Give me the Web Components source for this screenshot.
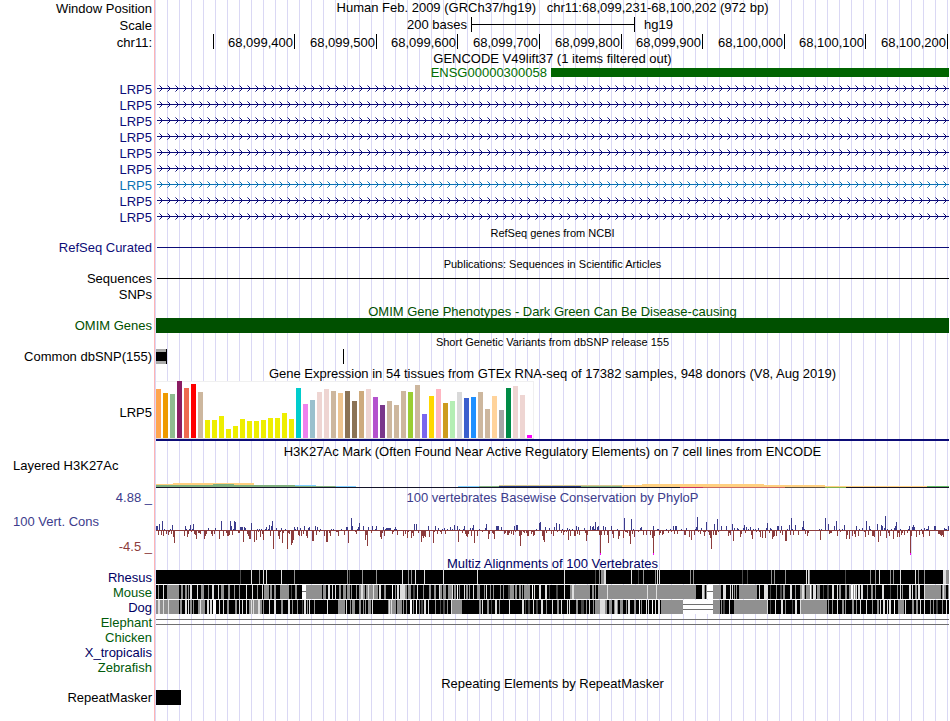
<!DOCTYPE html>
<html lang="en">
<head>
<meta charset="utf-8">
<title>Genome Browser</title>
<style>
body { margin: 0; background: #fff; }
</style>
</head>
<body>
<genome-browser>
  <track-row label="Window Position" size="17"><track-title head>Human Feb. 2009 (GRCh37/hg19)&nbsp;&nbsp; chr11:68,099,231-68,100,202 (972 bp)</track-title></track-row>
  <track-row label="Scale" size="17"><scale-bar assembly="hg19">200 bases</scale-bar></track-row>
  <track-row label="chr11:" size="17"><axis-ruler></axis-ruler></track-row>
  <track-row size="15"><track-title head>GENCODE V49lift37 (1 items filtered out)</track-title></track-row>
  <track-row size="14"><gene-block>ENSG00000300058</gene-block></track-row>
  <track-row label="LRP5" tone="navy" low><intron-line></intron-line></track-row>
  <track-row label="LRP5" tone="navy" low><intron-line></intron-line></track-row>
  <track-row label="LRP5" tone="navy" low><intron-line></intron-line></track-row>
  <track-row label="LRP5" tone="navy" low><intron-line></intron-line></track-row>
  <track-row label="LRP5" tone="navy" low><intron-line></intron-line></track-row>
  <track-row label="LRP5" tone="navy" low><intron-line></intron-line></track-row>
  <track-row label="LRP5" tone="blue" low><intron-line></intron-line></track-row>
  <track-row label="LRP5" tone="navy" low><intron-line></intron-line></track-row>
  <track-row label="LRP5" tone="navy" low><intron-line></intron-line></track-row>
  <track-row><track-title small>RefSeq genes from NCBI</track-title></track-row>
  <track-row label="RefSeq Curated" tone="navy"><intron-line plain></intron-line></track-row>
  <track-row size="15"><track-title small head>Publications: Sequences in Scientific Articles</track-title></track-row>
  <track-row label="Sequences"><intron-line plain></intron-line></track-row>
  <track-row label="SNPs"></track-row>
  <track-row size="15" tone="omim"><track-title>OMIM Gene Phenotypes - Dark Green Can Be Disease-causing</track-title></track-row>
  <track-row label="OMIM Genes" tone="omim"><feature-boxes kind="omim"></feature-boxes></track-row>
  <track-row size="15"><track-title small head>Short Genetic Variants from dbSNP release 155</track-title></track-row>
  <track-row label="Common dbSNP(155)"><feature-boxes kind="snp"></feature-boxes></track-row>
  <track-row><track-title>Gene Expression in 54 tissues from GTEx RNA-seq of 17382 samples, 948 donors (V8, Aug 2019)</track-title></track-row>
  <track-row label="LRP5" size="62" low><expression-bars></expression-bars></track-row>
  <track-row><track-title>H3K27Ac Mark (Often Found Near Active Regulatory Elements) on 7 cell lines from ENCODE</track-title></track-row>
  <track-row name="Layered H3K27Ac" size="30"><mark-signal></mark-signal></track-row>
  <track-row label="4.88 _" tone="cons"><track-title>100 vertebrates Basewise Conservation by PhyloP</track-title></track-row>
  <track-row name="100 Vert. Cons" foot="-4.5 _" size="50" tone="cons"><conservation-plot></conservation-plot></track-row>
  <track-row size="15" tone="deep"><track-title>Multiz Alignments of 100 Vertebrates</track-title></track-row>
  <track-row label="Rhesus" size="15" tone="deep"><alignment-strip species="rhesus"></alignment-strip></track-row>
  <track-row label="Mouse" size="15" tone="leaf"><alignment-strip species="mouse"></alignment-strip></track-row>
  <track-row label="Dog" size="15" tone="deep"><alignment-strip species="dog"></alignment-strip></track-row>
  <track-row label="Elephant" size="15" tone="leaf"><alignment-strip species="elephant"></alignment-strip></track-row>
  <track-row label="Chicken" size="15" tone="leaf"></track-row>
  <track-row label="X_tropicalis" size="15" tone="deep"></track-row>
  <track-row label="Zebrafish" size="15" tone="leaf"></track-row>
  <track-row size="15"><track-title>Repeating Elements by RepeatMasker</track-title></track-row>
  <track-row label="RepeatMasker"><feature-boxes kind="repeat"></feature-boxes></track-row>
</genome-browser>

<script>
const define = (name, html, setup) => {
  const tpl = document.createElement('template');
  tpl.innerHTML = html;
  customElements.define(name, class extends HTMLElement {
    constructor() {
      super();
      this.attachShadow({ mode: 'open' }).append(tpl.content.cloneNode(true));
    }
    connectedCallback() { if (setup) setup(this, this.shadowRoot); }
  });
};

// Plots share one horizontal scale: 793 units across the track area, first unit = 156.
const ORIGIN = 156, SPAN = 793;
const rect = (x, y, w, h, fill) => `<rect x="${x - ORIGIN}" y="${y}" width="${w}" height="${h}" fill="${fill}"/>`;
const plot = (h, body) => `<svg viewBox="0 0 ${SPAN} ${h}" height="${h}" preserveAspectRatio="none" shape-rendering="crispEdges" aria-hidden="true">${body}</svg>`;
const plotStyle = '<style>:host{display:block}svg{display:block;width:100%}</style>';
const randomFrom = seed => () => (seed = (seed * 1103515245 + 12345) % 2147483648) / 2147483648;

define('genome-browser', `
<style>
:host {
  display: block; min-height: 100vh; box-sizing: border-box;
  font: 13px/16px "Liberation Sans", Arial, sans-serif; color: #000;
  background:
    linear-gradient(#ffb4b4, #ffb4b4) 154px 0 / 1px 100% no-repeat,
    linear-gradient(#fff, #fff) 0 0 / 155px 100% no-repeat,
    linear-gradient(90deg, #dad8f4 0 1px, transparent 1px) 167px 0 / 12px 100%;
}
</style><slot></slot>`);

define('track-row', `
<style>
:host { display: grid; grid-template-columns: 152px minmax(0, 1fr); column-gap: 4px; padding-right: 1px; height: var(--size, 16px); }
:host([tone=navy]) { color: #0c0c78; }
:host([tone=blue]) { color: #0c72b4; }
:host([tone=omim]) { color: #005000; }
:host([tone=cons]) { color: #3c3c8c; }
:host([tone=deep]) { color: #000064; }
:host([tone=leaf]) { color: #005a0a; }
.side { display: flex; flex-direction: column; justify-content: center; text-align: right; white-space: nowrap; box-sizing: border-box; }
:host([low]) .side { padding-top: 2px; }
.side.split { justify-content: space-between; }
.name { text-align: left; padding-left: 13px; }
.split .name:only-child { margin-bottom: auto; line-height: 14px; }
.foot { color: #8c3c3c; }
.split.both { padding-top: 9px; }
</style>
<div class="side"></div><div class="data"><slot></slot></div>`, (el, root) => {
  el.style.setProperty('--size', (el.getAttribute('size') || 16) + 'px');
  const side = root.querySelector('.side');
  side.replaceChildren();
  for (const part of ['label', 'name', 'foot']) {
    if (!el.hasAttribute(part)) continue;
    const span = document.createElement('span');
    span.className = part;
    span.textContent = el.getAttribute(part);
    side.append(span);
  }
  side.classList.toggle('split', el.hasAttribute('name'));
  side.classList.toggle('both', el.hasAttribute('foot'));
});

define('track-title', `
<style>
:host { display: block; text-align: center; white-space: nowrap; line-height: 18px; }
:host([head]) { line-height: 16px; }
:host([small]) { font-size: 11px; }
</style><slot></slot>`);

define('scale-bar', `
<style>
:host { display: grid; grid-template-columns: 315fr 164fr 314fr; }
.text { text-align: right; padding-right: 4px; }
.bar { height: 15px; box-sizing: border-box; border: solid #000; border-width: 0 1px; background: linear-gradient(#000, #000) 0 7px / 100% 1px no-repeat; }
.db { padding-left: 9px; }
</style>
<span class="text"><slot></slot></span><span class="bar"></span><span class="db"></span>`,
(el, root) => { root.querySelector('.db').textContent = el.getAttribute('assembly'); });

define('axis-ruler', `
<style>
:host { display: grid; grid-template-columns: 58fr 81fr 82fr 81fr 82fr 82fr 81fr 82fr 81fr 82fr 1fr; line-height: 18px; }
span { height: 15px; border-right: 1px solid #000; text-align: right; padding-right: 1px; white-space: nowrap; }
</style>
<span></span><span>68,099,400</span><span>68,099,500</span><span>68,099,600</span><span>68,099,700</span><span>68,099,800</span><span>68,099,900</span><span>68,100,000</span><span>68,100,100</span><span>68,100,200</span>`);

define('gene-block', `
<style>
:host { display: grid; grid-template-columns: 395fr 398fr; color: #006e00; line-height: 14px; }
.text { text-align: right; padding-right: 4px; }
.exon { height: 9px; margin-top: 2px; background: #006400; }
</style><span class="text"><slot></slot></span><span class="exon"></span>`);

define('intron-line', `
<style>:host{display:block}svg{display:block}</style>
<svg width="100%" height="16" shape-rendering="crispEdges" aria-hidden="true">
<defs><pattern id="arrow" width="8" height="16" patternUnits="userSpaceOnUse">
<g fill="currentColor"><path d="M5 7h1v3h-1zM4 6h1v1h-1zM4 10h1v1h-1z"/><path opacity=".55" d="M3 5h1v1h-1zM3 11h1v1h-1z"/></g>
</pattern></defs>
<rect class="arrows" width="100%" height="16" fill="url(#arrow)"/>
<rect class="line" x="1" y="8" width="100%" height="1" fill="currentColor"/>
</svg>`, (el, root) => {
  if (!el.hasAttribute('plain')) return;
  root.querySelector('.arrows').remove();
  root.querySelector('.line').setAttribute('y', 7);
});

define('feature-boxes', plotStyle, (el, root) => {
  const kinds = {
    omim: rect(156, 0, 793, 15, '#005000'),
    snp: rect(156, 0, 11, 15, '#aaa') + rect(156, 3, 10, 9, '#000') + rect(166, 0, 1, 15, '#000') + rect(343, 0, 1, 15, '#000'),
    repeat: rect(156, 0, 25, 15, '#000')
  };
  root.innerHTML = plotStyle + plot(16, kinds[el.getAttribute('kind')]);
});

define('expression-bars', plotStyle, (el, root) => {
  const y = '#eeee00', tan = '#cdb79e', rose = '#eed5d2';
  const bars = [[49,'#ffa54f'],[45,'#ee9a00'],[44,'#8fbc8f'],[57,'#8b1c62'],[50,'#ee6a50'],[54,'#ff0000'],[46,tan],
    [18,y],[18,y],[22,y],[9,y],[12,y],[19,y],[17,y],[17,y],[18,y],[20,y],[20,y],[25,y],[19,y],
    [50,'#00cdcd'],[34,'#ee82ee'],[38,'#9ac0cd'],[46,rose],[49,rose],[47,tan],[45,'#eec591'],[47,'#8b7355'],[37,'#8b7355'],
    [47,'#cdaa7d'],[49,rose],[41,'#b452cd'],[33,'#7a378b'],[37,tan],[33,tan],[47,tan],[46,'#9acd32'],[53,tan],[24,'#7a67ee'],
    [42,'#ffd700'],[49,'#ffb6c1'],[35,'#cd9b1d'],[37,'#b4eeb4'],[46,'#d9d9d9'],[40,'#3a5fcd'],[41,'#1e90ff'],[46,tan],
    [29,tan],[42,'#ffd39b'],[28,'#a6a6a6'],[50,'#008b45'],[52,rose],[43,rose],[3,'#ff00ff']];
  let s = rect(156, 0, 378, 58, '#f0f0f0') + rect(156, 1, 377, 56, '#fff') + rect(156, 57, 378, 1, '#dcdcdc');
  bars.forEach(([h, c], i) => { s += rect(156 + i * 7, 57 - h, 5, h, c); });
  root.innerHTML = plotStyle + plot(62, s + rect(156, 58, 793, 2, '#0c0c78'));
});

define('mark-signal', plotStyle, (el, root) => {
  const o = '#ffd080', g = '#7fb07f', b = '#80d0ff';
  // [start, end, top, height, colour]
  const parts = [[156,173,25,1,o],[173,254,24,2,o],[156,295,26,2,g],[213,234,25,1,g],[295,336,27,1,g],[295,316,26,1,b],[336,356,27,1,b],
    [458,479,27,1,b],[479,499,27,1,g],[499,622,26,1,'#d8c890'],[499,581,27,1,'#203880'],[581,622,27,1,g],[622,642,26,2,o],
    [642,764,25,3,o],[764,825,26,2,o],[825,927,27,1,o],[927,949,27,1,'#60b860'],
    [156,949,28,1,'#141428'],[680,703,28,1,'#c03060'],[703,785,28,1,'#c86860'],[785,825,28,1,'#605040'],[825,846,28,1,'#80b050']];
  root.innerHTML = plotStyle + plot(30, parts.map(([a, z, t, h, c]) => rect(a, t, z - a, h, c)).join(''));
});

define('conservation-plot', plotStyle, (el, root) => {
  const up = '159 6 162 9 172 5 185 4 190 5 193 6 221 9 230 9 234 9 235 8 240 3 241 3 242 3 251 7 272 9 269 5 266 3 297 3 346 3 347 3 351 12 359 7 363 4 372 4 386 2 387 2 388 2 389 2 390 2 395 3 414 6 416 6 444 2 454 5 473 5 486 6 496 4 498 4 516 5 517 5 539 7 540 8 556 7 559 6 576 4 590 4 595 8 624 12 631 11 641 3 653 4 675 4 676 4 697 13 706 8 714 6 717 11 732 6 744 5 767 7 778 4 781 4 789 5 791 12 795 5 803 9 825 12 828 6 836 9 844 5 856 4 866 9 877 6 881 5 882 4 885 14 896 8 909 4 912 3 913 5 914 3 928 4 948 4';
  const down = '158 5 163 6 166 4 171 4 173 7 174 13 184 6 187 7 188 4 195 5 196 9 200 4 204 9 205 6 211 4 212 6 219 9 227 6 238 3 239 3 243 12 248 6 249 9 250 9 254 12 256 10 260 7 263 10 270 6 273 19 278 6 279 9 282 13 287 19 291 15 292 13 293 10 299 6 306 6 307 8 312 11 313 11 316 5 326 12 327 12 330 6 344 5 348 13 365 10 367 16 380 7 381 9 392 4 397 5 407 8 411 8 413 6 421 12 422 6 423 8 424 6 425 7 429 7 433 13 458 12 466 6 467 7 474 13 488 9 494 9 504 4 513 5 519 6 520 16 528 6 542 6 543 10 544 12 551 4 568 10 575 6 586 11 600 24 607 5 608 13 613 8 618 9 623 8 629 6 630 14 634 7 643 5 652 8 653 24 654 6 663 4 684 5 685 5 689 7 691 10 710 8 711 19 733 11 740 7 752 9 760 7 762 8 765 8 772 9 773 7 774 6 785 11 786 11 793 5 807 6 820 10 837 6 846 9 849 9 855 7 858 6 865 7 872 6 873 6 874 7 878 12 880 6 886 8 893 9 897 7 899 7 910 24 911 6 916 7 919 5 923 7 938 4 939 4 940 5 941 6 942 5 943 7';
  const table = text => { const m = {}, v = text.split(' ').map(Number); for (let i = 0; i < v.length; i += 2) m[v[i]] = v[i + 1]; return m; };
  const U = table(up), D = table(down), rnd = randomFrom(41);
  let s = '';
  for (let x = 156; x < 949; x++) {
    const a = rnd(), b = rnd();
    const u = U[x] || (!D[x] && a < 0.24 ? 1 + Math.floor(b * b * 4) : 0);
    const d = D[x] || (u ? 1 : a < 0.5 ? 1 : 1 + Math.floor(b * b * 6));
    if (u) s += rect(x, 25 - u, 1, u, '#3c3c8c');
    s += rect(x, 25, 1, d, '#8c3c3c');
    if (d === 24) s += rect(x, 48, 1, 2, '#ff00ff');
  }
  root.innerHTML = plotStyle + plot(50, s);
});

define('alignment-strip', plotStyle, (el, root) => {
  const K = '#000', G = '#909090', L = '#dedede', W = '#fff', D = '#484848', H = 14;
  const species = el.getAttribute('species');
  let s = '';
  if (species === 'elephant') {
    s = rect(156, 4, 793, 1, '#707070') + rect(156, 9, 793, 1, '#707070');
  } else if (species === 'rhesus') {
    s = rect(156, 0, 793, H, K);
    const marks = { D: [240, 349, 595, 638, 742, 747, 845], G: [259, 294, 347, 362, 376, 408, 411, 599, 601, 602, 603, 643, 655, 690, 693, 771, 774, 785, 809, 870, 875, 890, 893, 918, 924],
      L: [251, 263, 266, 281, 402, 415, 424, 443, 477, 564, 604, 605, 631, 657, 659, 806, 808, 879, 900, 915, 943, 944, 945] };
    const tone = { D, G, L };
    for (const k in marks) for (const x of marks[k]) s += rect(x, 0, 1, H, tone[k]);
    s += rect(946, 0, 3, H, G);
  } else {
    // Region codes: K black, G grey, L pale, m black with stripes, g grey with stripes, v dense mix, - single gap, = double gap
    const regions = {
      mouse: '156v 167G 179m 200v 226m 264G 269m 280G 289m 302- 306G 322v 359g 378m 400L 405g 411m 440g 453v 492m 510G 514v 526G 530m 572L 574G 590v 598G 607L 608G 622G 647L 648G 656L 657G 696K 702L 704g 707- 713G 721v 739G 757v 764L 768m 800g 812v 845g 857m 925G 940g',
      dog: '156g 171G 179v 198g 205v 222m 250g 262m 290v 315K 327L 328K 338G 345v 375K 388g 397G 402v 420m 452G 462K 477v 500K 509L 510K 520m 560m 575v 597G 600L 605g 618v 640m 661G 683= 713G 720v 735G 767L 768m 801G 827v 850m 898G 904m'
    };
    const rnd = randomFrom(species === 'mouse' ? 7 : 19);
    const list = regions[species].split(' ').map(r => [parseInt(r), r.slice(-1)]);
    const solid = { K, G, L };
    list.forEach(([a, code], i) => {
      const z = i + 1 < list.length ? list[i + 1][0] : 949;
      if (code === '-' || code === '=') {
        s += rect(a, 0, z - a, H, W);
        for (const y of code === '-' ? [6] : [4, 9]) s += rect(a, y, z - a, 1, '#707070');
        return;
      }
      s += rect(a, 0, z - a, H, solid[code] || (code === 'g' ? G : K));
      if (solid[code]) return;
      const run = { m: 6, v: 4, g: 4 }[code];
      for (let x = a + 1 + Math.floor(rnd() * 2); x < z;) {
        const p = rnd(), w = Math.min(z - x, rnd() < 0.6 ? 1 : 2 + (code === 'v' && rnd() < 0.4 ? 1 : 0));
        const c = code === 'g' ? (p < 0.35 ? K : p < 0.85 ? L : W) : (p < 0.5 ? G : p < 0.85 ? L : p < 0.9 ? W : D);
        s += rect(x, 0, w, H, c);
        x += w + 1 + Math.floor(rnd() * run);
      }
    });
  }
  root.innerHTML = plotStyle + plot(15, s);
});
</script>
</body>
</html>
